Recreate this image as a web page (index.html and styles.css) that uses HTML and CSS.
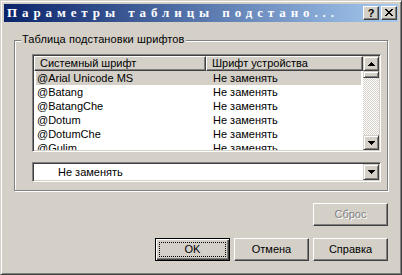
FILE: index.html
```html
<!DOCTYPE html>
<html lang="ru">
<head>
<meta charset="utf-8">
<title>Параметры таблицы подстановки</title>
<link rel="stylesheet" href="styles.css">
</head>
<body>
<div class="window">
  <div class="titlebar">
    <span class="title">Параметры таблицы подстано...</span>
    <div class="caption-btns">
      <div class="cbtn help">?</div>
      <div class="cbtn close">
        <svg width="8" height="7" viewBox="0 0 8 7" shape-rendering="crispEdges">
          <path d="M0 0h2v1h-2zM6 0h2v1h-2zM1 1h2v1h-2zM5 1h2v1h-2zM2 2h4v1h-4zM3 3h2v1h-2zM2 4h4v1h-4zM1 5h2v1h-2zM5 5h2v1h-2zM0 6h2v1h-2zM6 6h2v1h-2z" fill="#000"/>
        </svg>
      </div>
    </div>
  </div>
  <div class="group">
    <span class="legend">Таблица подстановки шрифтов</span>
    <div class="listview">
      <div class="lv-main">
        <div class="lv-header">
          <div class="hcol c1">Системный шрифт</div>
          <div class="hcol c2">Шрифт устройства</div>
        </div>
        <div class="lv-rows">
          <div class="row sel"><span class="cell c1">@Arial Unicode MS</span><span class="cell c2">Не заменять</span></div>
          <div class="row"><span class="cell c1">@Batang</span><span class="cell c2">Не заменять</span></div>
          <div class="row"><span class="cell c1">@BatangChe</span><span class="cell c2">Не заменять</span></div>
          <div class="row"><span class="cell c1">@Dotum</span><span class="cell c2">Не заменять</span></div>
          <div class="row"><span class="cell c1">@DotumChe</span><span class="cell c2">Не заменять</span></div>
          <div class="row"><span class="cell c1">@Gulim</span><span class="cell c2">Не заменять</span></div>
        </div>
      </div>
      <div class="vscroll">
        <div class="sbtn up">
          <svg width="7" height="4" viewBox="0 0 7 4" shape-rendering="crispEdges"><path d="M3 0h1v1h-1zM2 1h3v1h-3zM1 2h5v1h-5zM0 3h7v1h-7z" fill="#000"/></svg>
        </div>
        <div class="thumb"></div>
        <div class="track"></div>
        <div class="sbtn down">
          <svg width="7" height="4" viewBox="0 0 7 4" shape-rendering="crispEdges"><path d="M0 0h7v1h-7zM1 1h5v1h-5zM2 2h3v1h-3zM3 3h1v1h-1z" fill="#000"/></svg>
        </div>
      </div>
    </div>
    <div class="combo">
      <span class="combo-text">Не заменять</span>
      <div class="sbtn combo-btn">
        <svg width="7" height="4" viewBox="0 0 7 4" shape-rendering="crispEdges"><path d="M0 0h7v1h-7zM1 1h5v1h-5zM2 2h3v1h-3zM3 3h1v1h-1z" fill="#000"/></svg>
      </div>
    </div>
  </div>
  <div class="btn-row first">
    <div class="btn disabled">Сброс</div>
  </div>
  <div class="btn-row">
    <div class="btn default"><span class="focus">OK</span></div>
    <div class="btn">Отмена</div>
    <div class="btn">Справка</div>
  </div>
</div>
</body>
</html>
```
FILE: styles.css
```css
html, body {
  margin: 0;
  padding: 0;
  background: #D4D0C8;
}
body {
  font-family: "Liberation Sans", Arial, sans-serif;
  font-size: 11px;
  color: #000;
}
.window {
  width: 402px;
  height: 275px;
  box-sizing: border-box;
  background: #D4D0C8;
  border: 1px solid;
  border-color: #D4D0C8 #404040 #404040 #D4D0C8;
  box-shadow: inset 1px 1px #fff, inset -1px -1px #808080;
  padding: 3px;
}
.titlebar {
  height: 18px;
  background: linear-gradient(to right, #0A246A, #A6CAF0);
  display: flex;
  align-items: center;
  padding-left: 3px;
}
.title {
  flex: 1;
  color: #fff;
  font-family: "Liberation Serif", "Times New Roman", serif;
  font-weight: bold;
  font-size: 13px;
  letter-spacing: 4.9px;
  white-space: nowrap;
  overflow: hidden;
}
.caption-btns {
  display: flex;
  gap: 2px;
  margin-right: 1px;
}
.cbtn {
  width: 16px;
  height: 14px;
  box-sizing: border-box;
  background: #D4D0C8;
  border: 1px solid;
  border-color: #fff #404040 #404040 #fff;
  box-shadow: inset -1px -1px #808080;
  display: flex;
  align-items: center;
  justify-content: center;
}
.cbtn.help {
  font-family: "Liberation Sans", Arial, sans-serif;
  font-weight: bold;
  font-size: 11px;
  line-height: 12px;
  padding-bottom: 1px;
}
.cbtn.close svg {
  margin-left: -1px;
  margin-top: -1px;
}
.group {
  position: relative;
  margin: 18px 10px 0;
  border: 1px solid #808080;
  box-shadow: inset 1px 1px #fff, 1px 1px #fff;
  padding: 13px 0 8px 17px;
}
.legend {
  position: absolute;
  left: 6px;
  top: -8px;
  padding: 0 1px;
  background: #D4D0C8;
  line-height: 13px;
  white-space: nowrap;
  letter-spacing: 0.1px;
}
.listview {
  width: 349px;
  height: 98px;
  box-sizing: border-box;
  border: 1px solid;
  border-color: #808080 #fff #fff #808080;
  box-shadow: inset 1px 1px #404040, inset -1px -1px #D4D0C8;
  padding: 1px;
  background: #fff;
  display: flex;
}
.lv-main {
  flex: 1;
  overflow: hidden;
  min-width: 0;
}
.lv-header {
  display: flex;
  height: 15px;
}
.hcol {
  box-sizing: border-box;
  height: 15px;
  background: #D4D0C8;
  border: 1px solid;
  border-color: #fff #404040 #404040 #fff;
  box-shadow: inset -1px -1px #808080;
  line-height: 12px;
  padding-left: 5px;
  white-space: nowrap;
}
.hcol.c1 { width: 172px; }
.hcol.c2 { flex: 1; }
.row {
  display: flex;
  height: 14px;
  line-height: 14px;
  margin: 0 2px 0 2px;
  white-space: nowrap;
}
.row.sel { background: #D4D0C8; }
.cell.c1 {
  width: 170px;
  padding-left: 1px;
  box-sizing: border-box;
}
.cell.c2 {
  padding-left: 7px;
}
.vscroll {
  width: 16px;
  display: flex;
  flex-direction: column;
}
.sbtn {
  box-sizing: border-box;
  width: 16px;
  background: #D4D0C8;
  border: 1px solid;
  border-color: #D4D0C8 #404040 #404040 #D4D0C8;
  box-shadow: inset 1px 1px #fff, inset -1px -1px #808080;
  display: flex;
  align-items: center;
  justify-content: center;
}
.sbtn.up, .sbtn.down { height: 15px; }
.thumb {
  box-sizing: border-box;
  height: 7px;
  background: #D4D0C8;
  border: 1px solid;
  border-color: #D4D0C8 #404040 #404040 #D4D0C8;
  box-shadow: inset 1px 1px #fff, inset -1px -1px #808080;
}
.track {
  flex: 1;
  background-color: #fff;
  background-image: repeating-conic-gradient(#D4D0C8 0 25%, #fff 0 50%);
  background-size: 2px 2px;
}
.combo {
  margin-top: 10px;
  width: 349px;
  height: 20px;
  box-sizing: border-box;
  border: 1px solid;
  border-color: #808080 #fff #fff #808080;
  box-shadow: inset 1px 1px #404040, inset -1px -1px #D4D0C8;
  padding: 1px;
  background: #fff;
  display: flex;
}
.combo-text {
  flex: 1;
  padding-left: 24px;
  line-height: 16px;
}
.combo-btn {
  height: 16px;
}
.btn-row {
  display: flex;
  justify-content: flex-end;
  gap: 4px;
  padding-right: 10px;
  margin-top: 12px;
}
.btn {
  width: 75px;
  height: 23px;
  box-sizing: border-box;
  background: #D4D0C8;
  border: 1px solid;
  border-color: #fff #404040 #404040 #fff;
  box-shadow: inset -1px -1px #808080;
  display: flex;
  align-items: center;
  justify-content: center;
  line-height: 13px;
}
.btn.disabled {
  color: #808080;
  text-shadow: 1px 1px #fff;
}
.btn.default {
  border: 1px solid #000;
  box-shadow: inset 1px 1px #fff, inset -1px -1px #404040, inset -2px -2px #808080;
  padding: 3px;
  align-items: stretch;
}
.focus {
  flex: 1;
  border: 1px dotted #000;
  display: flex;
  align-items: center;
  justify-content: center;
}
```
